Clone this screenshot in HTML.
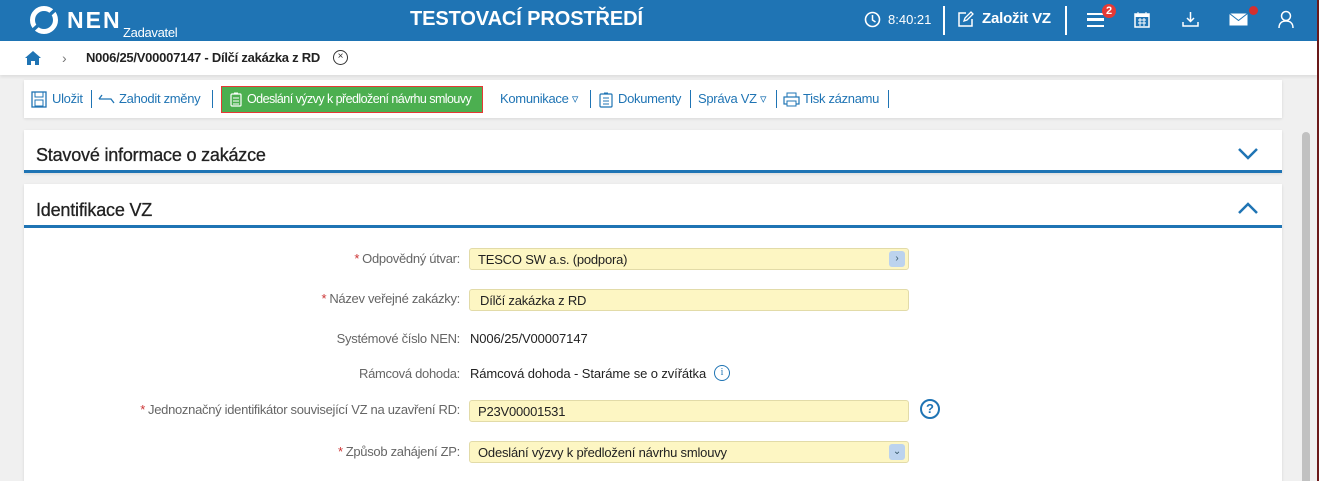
<!DOCTYPE html>
<html><head><meta charset="utf-8"><style>
*{box-sizing:border-box;margin:0;padding:0}
html{overflow:hidden;height:481px}
body{width:1319px;height:481px;overflow:hidden;background:#f0f0f0;font-family:"Liberation Sans",Arial,sans-serif;position:relative;border-right:2px solid #6b1a1a}
.hdr{position:absolute;left:0;top:0;width:1317px;height:41px;background:#1f74b4;color:#fff}
.abs{position:absolute}
.bc{position:absolute;left:0;top:41px;width:1317px;height:34px;background:#fff;box-shadow:0 2px 3px rgba(0,0,0,.08)}
.tb{position:absolute;left:24px;top:80px;width:1258px;height:38px;background:#fff;box-shadow:0 1px 3px rgba(0,0,0,.1)}
.tb span{position:absolute;top:11px;font-size:13px;color:#1f74b4;letter-spacing:-.3px;white-space:nowrap}
.sep{position:absolute;top:10px;width:1px;height:18px;background:#1f74b4}
.card{position:absolute;left:24px;width:1258px;background:#fff;box-shadow:0 1px 3px rgba(0,0,0,.1)}
.card h2{position:absolute;left:12px;font-size:18px;font-weight:normal;color:#222;-webkit-text-stroke:.3px #222;letter-spacing:-.2px}
.line{position:absolute;left:0;width:1258px;height:3px;background:#1f74b4}
.lbl{position:absolute;right:857px;font-size:13px;color:#666;white-space:nowrap;letter-spacing:-.3px}
.lbl b{color:#c33;font-weight:normal;margin-right:3px}
.val{position:absolute;left:470px;font-size:13px;color:#222;letter-spacing:-.1px}
.inp{position:absolute;left:469px;width:440px;height:22px;background:#fdf6c3;border:1px solid #e2dba8;border-radius:3px;font-size:13px;color:#222;padding:3px 0 0 8px;letter-spacing:-.2px}
.btn{position:absolute;right:3px;top:2px;width:16px;height:16px;background:#bcd3ee;border-radius:3px;color:#356;font-size:10px;text-align:center;line-height:16px}
</style></head><body>
<div class="hdr">
 <svg class="abs" style="left:29px;top:5px" width="30" height="30" viewBox="0 0 30 30"><circle cx="15" cy="15" r="11.5" fill="none" stroke="#fff" stroke-width="5"/><path d="M4 25 L26 5" stroke="#1f74b4" stroke-width="3.5"/></svg>
 <div class="abs" style="left:67px;top:7px;font-size:23px;font-weight:bold;letter-spacing:2px">NEN</div>
 <div class="abs" style="left:123px;top:25px;font-size:13px;letter-spacing:-.3px">Zadavatel</div>
 <div class="abs" style="left:410px;top:8px;font-size:20px;font-weight:bold;letter-spacing:-.1px">TESTOVACÍ PROSTŘEDÍ</div>
 <svg class="abs" style="left:864px;top:11px" width="17" height="17"><circle cx="8.5" cy="8.5" r="7" fill="none" stroke="#fff" stroke-width="1.6"/><path d="M8.5 4v5l3 2" fill="none" stroke="#fff" stroke-width="1.5"/></svg>
 <div class="abs" style="left:888px;top:12px;font-size:13px">8:40:21</div>
 <div class="abs" style="left:943px;top:6px;width:2px;height:29px;background:#fff"></div>
 <svg class="abs" style="left:957px;top:11px" width="17" height="17"><path d="M9 2H2v13h13V8" fill="none" stroke="#fff" stroke-width="1.5"/><path d="M7 10l1-3 6-6 2 2-6 6z" fill="none" stroke="#fff" stroke-width="1.3"/></svg>
 <div class="abs" style="left:982px;top:10px;font-size:15px;font-weight:bold;letter-spacing:-.2px">Založit VZ</div>
 <div class="abs" style="left:1065px;top:6px;width:2px;height:29px;background:#fff"></div>
 <div class="abs" style="left:1087px;top:13px;width:17px;height:14px;border-top:2.5px solid #fff;border-bottom:2.5px solid #fff"><div style="margin-top:3px;height:2.5px;background:#fff"></div></div>
 <div class="abs" style="left:1102px;top:4px;width:14px;height:14px;border-radius:7px;background:#e53935;font-size:11px;font-weight:bold;text-align:center;line-height:14px">2</div>
 <svg class="abs" style="left:1134px;top:11px" width="16" height="17"><rect x="1" y="3" width="14" height="13" fill="none" stroke="#fff" stroke-width="1.5"/><rect x="1" y="3" width="14" height="3" fill="#fff"/><path d="M4 1v3M12 1v3M4 9h8M4 12h8M6 7v8M10 7v8" stroke="#fff"/></svg>
 <svg class="abs" style="left:1182px;top:11px" width="17" height="17"><path d="M8.5 1v9M5 7l3.5 3.5L12 7M1 11v4h15v-4" fill="none" stroke="#fff" stroke-width="1.5"/></svg>
 <svg class="abs" style="left:1229px;top:13px" width="19" height="13"><rect x=".5" y=".5" width="18" height="12" fill="#fff"/><path d="M.5 .5l9 7 9-7" fill="none" stroke="#1f74b4"/></svg>
 <div class="abs" style="left:1249px;top:6px;width:9px;height:9px;border-radius:5px;background:#d32f2f"></div>
 <svg class="abs" style="left:1278px;top:10px" width="16" height="19"><circle cx="8" cy="6" r="4.5" fill="none" stroke="#fff" stroke-width="1.5"/><path d="M1 18c0-5 3-7 7-7s7 2 7 7" fill="none" stroke="#fff" stroke-width="1.5"/></svg>
</div>
<div class="bc">
 <svg class="abs" style="left:24px;top:9px" width="18" height="16"><path d="M9 1L1 8h2v7h4v-4h4v4h4V8h2z" fill="#1f74b4"/></svg>
 <div class="abs" style="left:62px;top:9px;font-size:14px;color:#777">›</div>
 <div class="abs" style="left:86px;top:9px;font-size:13px;font-weight:bold;color:#222;letter-spacing:-.25px">N006/25/V00007147 - Dílčí zakázka z RD</div>
 <div class="abs" style="left:333px;top:9px;width:15px;height:15px;border:1.3px solid #333;border-radius:8px;font-size:10px;text-align:center;line-height:12px;color:#333">×</div>
</div>
<div class="tb">
 <svg class="abs" style="left:7px;top:11px" width="16" height="17"><rect x="1" y="1" width="14" height="15" fill="none" stroke="#1f74b4" stroke-width="1.3"/><rect x="4" y="1" width="8" height="5" fill="none" stroke="#1f74b4"/><rect x="4" y="9" width="8" height="6" fill="none" stroke="#1f74b4"/></svg>
 <span style="left:28px">Uložit</span><div class="sep" style="left:67px"></div>
 <svg class="abs" style="left:74px;top:13px" width="18" height="12"><path d="M1 6h12l3 4M1 6l3-4" fill="none" stroke="#1f74b4" stroke-width="1.3"/></svg>
 <span style="left:95px">Zahodit změny</span><div class="sep" style="left:188px"></div>
 <div class="abs" style="left:197px;top:6px;width:262px;height:27px;background:#4caf50;border:1px solid #e53935"></div>
 <svg class="abs" style="left:206px;top:12px" width="12" height="15"><rect x="1" y="2" width="10" height="12" rx="1" fill="none" stroke="#fff" stroke-width="1.2"/><path d="M3 6h6M3 9h6M3 12h6M4 1h4" stroke="#fff"/></svg>
 <span style="left:223px;top:12px;color:#fff;font-size:12.5px;letter-spacing:-.55px">Odeslání výzvy k předložení návrhu smlouvy</span>
 <span style="left:476px">Komunikace ▿</span><div class="sep" style="left:566px"></div>
 <svg class="abs" style="left:575px;top:12px" width="14" height="16"><rect x="1" y="2" width="12" height="13" rx="1" fill="none" stroke="#1f74b4" stroke-width="1.2"/><path d="M4 6h6M4 9h6M4 12h6M5 1h4" stroke="#1f74b4"/></svg>
 <span style="left:594px">Dokumenty</span><div class="sep" style="left:666px"></div>
 <span style="left:674px">Správa VZ ▿</span><div class="sep" style="left:752px"></div>
 <svg class="abs" style="left:759px;top:12px" width="17" height="15"><rect x="1" y="5" width="15" height="7" fill="none" stroke="#1f74b4" stroke-width="1.2"/><rect x="4" y="1" width="9" height="4" fill="none" stroke="#1f74b4"/><rect x="4" y="9" width="9" height="5" fill="#fff" stroke="#1f74b4"/></svg>
 <span style="left:779px">Tisk záznamu</span><div class="sep" style="left:864px"></div>
</div>
<div class="card" style="top:130px;height:43px">
 <h2 style="top:15px">Stavové informace o zakázce</h2>
 <svg class="abs" style="left:1213px;top:17px" width="22" height="13"><path d="M2 2l9 9 9-9" fill="none" stroke="#1f74b4" stroke-width="2.5"/></svg>
 <div class="line" style="top:40px"></div>
</div>
<div class="card" style="top:184px;height:300px">
 <h2 style="top:16px">Identifikace VZ</h2>
 <svg class="abs" style="left:1213px;top:18px" width="22" height="13"><path d="M2 11l9-9 9 9" fill="none" stroke="#1f74b4" stroke-width="2.5"/></svg>
 <div class="line" style="top:41px"></div>
</div>
<div class="lbl" style="top:251px"><b>*</b>Odpovědný útvar:</div>
<div class="inp" style="top:248px">TESCO SW a.s. (podpora)<div class="btn">›</div></div>
<div class="lbl" style="top:291px"><b>*</b>Název veřejné zakázky:</div>
<div class="inp" style="top:289px;padding-left:10px">Dílčí zakázka z RD</div>
<div class="lbl" style="top:331px">Systémové číslo NEN:</div>
<div class="val" style="top:331px">N006/25/V00007147</div>
<div class="lbl" style="top:366px">Rámcová dohoda:</div>
<div class="val" style="top:366px">Rámcová dohoda - Staráme se o zvířátka</div>
<div class="abs" style="left:714px;top:365px;width:16px;height:16px;border:1.3px solid #1f74b4;border-radius:8px;font-size:10px;color:#1f74b4;text-align:center;line-height:14px;font-family:'Liberation Serif'">i</div>
<div class="lbl" style="top:402px"><b>*</b>Jednoznačný identifikátor související VZ na uzavření RD:</div>
<div class="inp" style="top:400px">P23V00001531</div>
<div class="abs" style="left:920px;top:399px;width:20px;height:20px;border:2px solid #1f74b4;border-radius:10px;font-size:13px;font-weight:bold;color:#1f74b4;text-align:center;line-height:16px">?</div>
<div class="lbl" style="top:444px"><b>*</b>Způsob zahájení ZP:</div>
<div class="inp" style="top:441px">Odeslání výzvy k předložení návrhu smlouvy<div class="btn">⌄</div></div>
<div class="abs" style="left:1302px;top:132px;width:8px;height:360px;background:#c1c1c1;border-radius:4px"></div>
</body></html>
